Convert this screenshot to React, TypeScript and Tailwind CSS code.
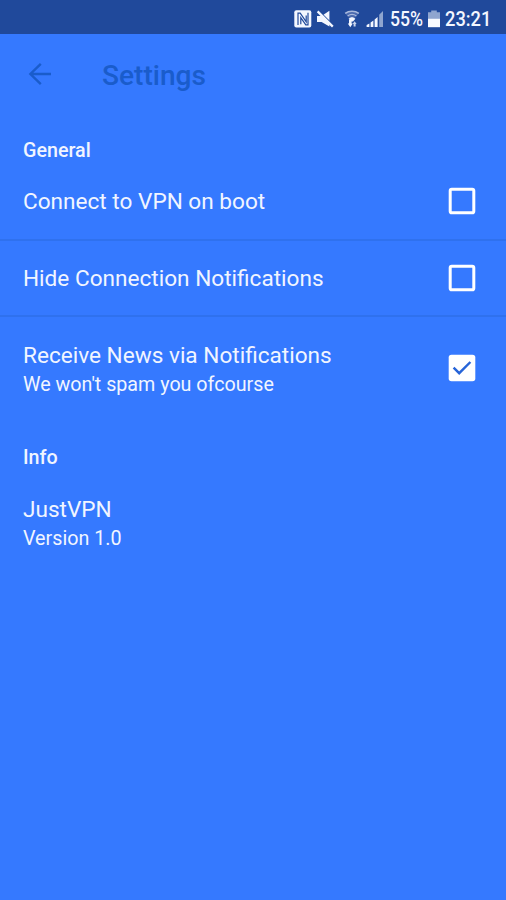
import { useState } from "react";
import type { ReactNode } from "react";
import clsx from "clsx";

type CheckRowProps = {
  title: string;
  summary?: string;
  defaultChecked?: boolean;
  className?: string;
};

function NfcIcon() {
  return (
    <svg viewBox="0 0 18 18" className="h-[18px] w-[18px]" fill="none">
      <rect x="0.3" y="0.3" width="17" height="17.2" rx="2" fill="#f4f7ff" />
      <path d="M4 15V3.2h2.2l6 8.6V5.4" stroke="#20499b" strokeWidth="1.2" />
      <path d="M14 2.8v12h-2.2l-5-7.2v6.6" stroke="#20499b" strokeWidth="1.2" />
    </svg>
  );
}

function MuteIcon() {
  return (
    <svg viewBox="0 0 18 18" className="h-[18px] w-[18px]">
      <path d="M1 6h4.6L13.4.8v15.8L5.6 12H1z" fill="#f4f7ff" />
      <path d="M3 .8 17.6 15.4" stroke="#20499b" strokeWidth="1.2" />
      <path d="M1.6 1.4 16.8 16.6" stroke="#f4f7ff" strokeWidth="2.2" />
    </svg>
  );
}

function WifiIcon() {
  return (
    <svg viewBox="0 0 16 18" className="h-[18px] w-4" fill="none">
      <path d="M1.2 3.4C5 .6 11 .6 14.8 3.4L8 11z" fill="#4a69ae" />
      <path d="M1.2 3.4C5 .6 11 .6 14.8 3.4" stroke="#a9b9dc" strokeWidth="1.6" />
      <path d="M3.6 6c2.8-2 6-2 8.8 0" stroke="#a9b9dc" strokeWidth="1.3" />
      <path d="M4.6 8.8c1.8-2.2 5-2.2 6.8 0L9 11.4H7z" fill="#f4f7ff" />
      <path d="M5 9.8h2.6v3.8h1.2l-2.5 3.6-2.5-3.6H5z" fill="#f4f7ff" />
      <path d="M9.6 16.4v-2.4H8.6l2-2.8 2 2.8h-1v2.4z" fill="#c9d5ee" />
    </svg>
  );
}

function SignalIcon() {
  return (
    <svg viewBox="0 0 18 18" className="h-[18px] w-[18px]">
      <path d="M0.6 17v-2l2.8-1.6V17zM4.6 17v-4.6l2.8-2V17zM8.6 17V9.4l3-2.4v10z" fill="#f4f7ff" />
      <path d="M13.2 17V4.8L17 1v16z" fill="#8fa5cf" />
    </svg>
  );
}

function BatteryIcon() {
  return (
    <svg viewBox="0 0 12 18" className="h-[18px] w-3">
      <path d="M3.2.4h5.6v1.8H12v6.6H0V2.2h3.2z" fill="#8fa5cf" />
      <path d="M0 8.6h12v8.6H0z" fill="#f8faff" />
    </svg>
  );
}

function StatusBar() {
  return (
    <div className="flex h-[34px] items-center bg-[#20499b] pl-[294px] pt-[3px] text-[21px] leading-none text-[#f4f7ff]">
      <NfcIcon />
      <div className="ml-1"><MuteIcon /></div>
      <div className="ml-[10px]"><WifiIcon /></div>
      <div className="ml-[6px]"><SignalIcon /></div>
      <span className="ml-[6px] w-[34px] origin-left scale-x-[0.84] whitespace-nowrap pt-px font-medium">55%</span>
      <div className="ml-1"><BatteryIcon /></div>
      <span className="ml-[5px] w-[50px] origin-left scale-x-[0.87] whitespace-nowrap pt-px font-medium">23:21</span>
    </div>
  );
}

function AppBar() {
  return (
    <header className="flex h-[80px] items-center">
      <button type="button" aria-label="Back" className="ml-[28px] h-6 w-6">
        <svg viewBox="0 0 24 24" className="h-6 w-6" fill="none" stroke="#1a5ccb" strokeWidth="2.4">
          <path d="M12.8 1.8 2.4 12l10.4 10.2M2.4 12H23" />
        </svg>
      </button>
      <h1 className="ml-[50px] pt-[3px] text-[28.1px] font-medium leading-[34px] text-[#1a5ccb]">Settings</h1>
    </header>
  );
}

function Category({ children, className }: { children: ReactNode; className?: string }) {
  return <h2 className={clsx("px-[23px] text-[19.7px] font-medium leading-[23px]", className)}>{children}</h2>;
}

function Checkbox({ checked }: { checked: boolean }) {
  return (
    <svg viewBox="0 0 28 28" className="h-7 w-7" fill="none">
      {checked ? (
        <>
          <rect x="0.7" y="0.7" width="26.6" height="26.6" rx="2.8" fill="#fff" />
          <path d="m5.6 13.6 5.6 5.6L22.4 8" stroke="#2764d8" strokeWidth="2.4" />
        </>
      ) : (
        <rect x="2.2" y="2.2" width="23.6" height="23.6" rx="1.6" stroke="#fff" strokeWidth="3" />
      )}
    </svg>
  );
}

function CheckRow({ title, summary, defaultChecked = false, className }: CheckRowProps) {
  const [checked, setChecked] = useState(defaultChecked);

  return (
    <button
      type="button"
      role="checkbox"
      aria-checked={checked}
      onClick={() => setChecked(!checked)}
      className={clsx("flex w-full items-center justify-between pl-[23px] pr-[30px] text-left", className)}
    >
      <span className={summary ? "pt-1" : "pt-0.5"}>
        <span className="block text-[22.6px] leading-[28px]">{title}</span>
        {summary && <span className="block text-[19.7px] leading-[29px]">{summary}</span>}
      </span>
      <Checkbox checked={checked} />
    </button>
  );
}

export default function App() {
  return (
    <div className="min-h-[900px] w-[506px] bg-[#3579ff] font-['Roboto',sans-serif] text-[#f1f5ff]">
      <StatusBar />
      <AppBar />
      <Category className="pt-[25px]">General</Category>
      <CheckRow
        title="Connect to VPN on boot"
        className="mt-px h-[78px] border-b-2 border-[#2f71ee]"
      />
      <CheckRow title="Hide Connection Notifications" className="h-[76px] border-b-2 border-[#2f71ee]" />
      <CheckRow
        title="Receive News via Notifications"
        summary="We won't spam you ofcourse"
        defaultChecked
        className="h-[102px]"
      />
      <Category className="pt-[27px]">Info</Category>
      <div className="px-[23px] pt-[27px]">
        <p className="text-[22.6px] leading-[28px]">JustVPN</p>
        <p className="text-[19.7px] leading-[30px]">Version 1.0</p>
      </div>
    </div>
  );
}
